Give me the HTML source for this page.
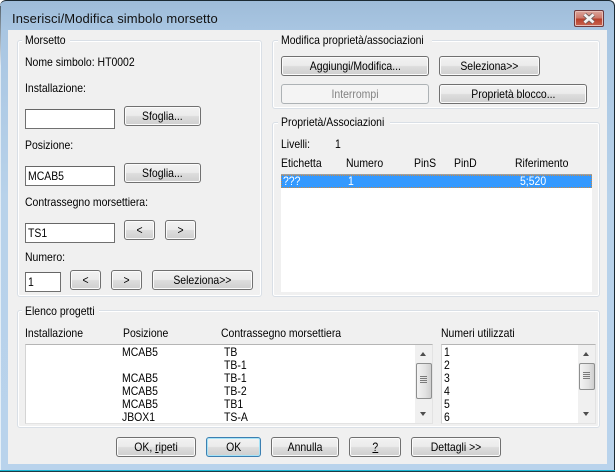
<!DOCTYPE html>
<html><head><meta charset="utf-8"><style>
html,body{margin:0;padding:0}
body{width:615px;height:472px;overflow:hidden;position:relative;font-family:"Liberation Sans",sans-serif;font-size:12px;color:#000;background:#fff}
#win{position:absolute;left:0;top:0;width:614px;height:471px;border:solid #1b2a33;border-width:1px 1px 0 0;border-radius:6px 6px 0 0;background:linear-gradient(180deg,#9ebcd9 0,#a9c6e2 30px,#b8d2ea 200px,#b9d3ec 100%)}
#lf{position:absolute;left:0;top:6px;width:1px;height:464px;background:linear-gradient(180deg,#55636e 0,#dfeaf4 60px,#e6f0f8 100%)}
#bot{position:absolute;left:0;top:470px;width:615px;height:1px;background:#19b5d2}
#bot2{position:absolute;left:0;top:471px;width:615px;height:1px;background:#1d3a44}
#client{position:absolute;left:8px;top:30px;width:599px;height:434px;background:#f0f0f0}
.a{position:absolute;white-space:nowrap;line-height:14px;transform:scaleX(.87);transform-origin:0 0}
.g{position:absolute;border:1px solid #d9dfe6;border-radius:3px;box-sizing:border-box;box-shadow:inset 0 0 0 1px #fff}
.l{position:absolute;background:#f0f0f0;padding:0 3px;white-space:nowrap;line-height:14px}
.l span{display:inline-block;transform:scaleX(.87);transform-origin:0 0}
.b{position:absolute;box-sizing:border-box;height:20px;border:1px solid #707070;border-radius:3px;background:linear-gradient(180deg,#f2f2f2 0,#ebebeb 48%,#dddddd 52%,#cfcfcf 100%);box-shadow:inset 0 0 0 1px #fbfbfb;text-align:center;line-height:18px;white-space:nowrap}
.b span{display:inline-block;transform:scaleX(.87)}
.d{background:#f4f4f4;border-color:#adb2b5;color:#838383;box-shadow:none}
.def{border-color:#3c7fb1;box-shadow:inset 0 0 0 1px #a6e3f7}
.i{position:absolute;box-sizing:border-box;height:20px;border:1px solid #707070;background:#fff;line-height:19px;padding-left:2px;border-top-color:#666}
.i span{display:inline-block;transform:scaleX(.87);transform-origin:0 0}
.list{position:absolute;background:#fff;box-sizing:border-box;border:1px solid #b5b5b5;border-left-color:#d4d4d4;border-right-color:#e3e3e3;border-bottom-color:#e3e3e3;overflow:hidden}
.sb{position:absolute;top:0;right:0;width:17px;height:78px;background:#f0f0f0}
.th{position:absolute;left:1px;width:14px;height:34px;top:19px;border:1px solid #8e8f8f;border-radius:2px;background:linear-gradient(90deg,#f3f3f3,#e2e2e2 60%,#cfcfcf)}
.ar{position:absolute;left:5px;width:0;height:0;border-left:3.5px solid transparent;border-right:3.5px solid transparent}
.gr{position:absolute;left:5px;width:7px;height:1px;background:#7a7a7a}
.rw{position:absolute;white-space:nowrap;line-height:13px;transform:scaleX(.87);transform-origin:0 0}
</style></head><body>
<div id="win"></div><div id="lf"></div><div id="bot"></div><div id="bot2"></div>
<div class="a" style="left:12px;top:12px;font-size:13px;letter-spacing:.1px;color:#111;transform:none">Inserisci/Modifica simbolo morsetto</div>
<div style="position:absolute;left:574px;top:10px;width:30px;height:17px;box-sizing:border-box;border:1px solid #6d3a3e;border-radius:2px;background:linear-gradient(180deg,#dca59b 0,#cd7a6c 45%,#b7402c 55%,#c9644f 100%);box-shadow:inset 0 0 0 1px #e7bdb6"><svg width="28" height="15" style="position:absolute;left:0;top:0"><path d="M9.5 3.5L18.500 11.500M18.500 3.500L9.500 11.500" stroke="#6b5a5a" stroke-width="4.4" fill="none"/><path d="M9.500 3.500L18.500 11.500M18.500 3.500L9.500 11.500" stroke="#f2f2f2" stroke-width="2.800" fill="none"/></svg></div>
<div id="client"></div>

<div class="g" style="left:17px;top:40px;width:245px;height:257px"></div>
<div class="l" style="left:22px;top:33px;width:42px"><span>Morsetto</span></div>
<div class="a" style="left:25px;top:55px">Nome simbolo: HT0002</div>
<div class="a" style="left:25px;top:81px">Installazione:</div>
<div class="i" style="left:25px;top:109px;width:90px"></div>
<div class="b" style="left:124px;top:106px;width:77px"><span>Sfoglia...</span></div>
<div class="a" style="left:25px;top:138px">Posizione:</div>
<div class="i" style="left:25px;top:166px;width:90px"><span>MCAB5</span></div>
<div class="b" style="left:124px;top:163px;width:77px"><span>Sfoglia...</span></div>
<div class="a" style="left:25px;top:195px">Contrassegno morsettiera:</div>
<div class="i" style="left:25px;top:223px;width:90px"><span>TS1</span></div>
<div class="b" style="left:124px;top:220px;width:31px"><span>&lt;</span></div>
<div class="b" style="left:165px;top:220px;width:31px"><span>&gt;</span></div>
<div class="a" style="left:25px;top:250px">Numero:</div>
<div class="i" style="left:25px;top:272px;width:36px"><span>1</span></div>
<div class="b" style="left:70px;top:270px;width:31px"><span>&lt;</span></div>
<div class="b" style="left:111px;top:270px;width:31px"><span>&gt;</span></div>
<div class="b" style="left:152px;top:270px;width:101px"><span>Seleziona&gt;&gt;</span></div>

<div class="g" style="left:272px;top:40px;width:328px;height:69px"></div>
<div class="l" style="left:278px;top:33px;width:148px"><span>Modifica proprietà/associazioni</span></div>
<div class="b" style="left:281px;top:56px;width:148px"><span>Aggiungi/Modifica...</span></div>
<div class="b" style="left:439px;top:56px;width:101px"><span>Seleziona&gt;&gt;</span></div>
<div class="b d" style="left:281px;top:84px;width:148px"><span>Interrompi</span></div>
<div class="b" style="left:439px;top:84px;width:148px"><span>Proprietà blocco...</span></div>

<div class="g" style="left:272px;top:122px;width:328px;height:175px"></div>
<div class="l" style="left:278px;top:115px;width:106px"><span>Proprietà/Associazioni</span></div>
<div class="a" style="left:281px;top:137px">Livelli:</div>
<div class="a" style="left:335px;top:137px">1</div>
<div class="a" style="left:281px;top:156px">Etichetta</div>
<div class="a" style="left:346px;top:156px">Numero</div>
<div class="a" style="left:414px;top:156px">PinS</div>
<div class="a" style="left:454px;top:156px">PinD</div>
<div class="a" style="left:515px;top:156px">Riferimento</div>
<div style="position:absolute;left:281px;top:174px;width:311px;height:118px;background:#fff;border-top:1px solid #a0a0a0;box-sizing:border-box"></div>
<div style="position:absolute;left:281px;top:175px;width:311px;height:13px;background:#3399ff;outline:1px dotted #c98a45;outline-offset:-1px"></div>
<div class="a" style="left:283px;top:174px;color:#fff">???</div>
<div class="a" style="left:348px;top:174px;color:#fff">1</div>
<div class="a" style="left:520px;top:174px;color:#fff">5;520</div>

<div class="g" style="left:17px;top:310px;width:583px;height:118px"></div>
<div class="l" style="left:22px;top:304px;width:71px"><span>Elenco progetti</span></div>
<div class="a" style="left:25px;top:326px">Installazione</div>
<div class="a" style="left:123px;top:326px">Posizione</div>
<div class="a" style="left:221px;top:326px">Contrassegno morsettiera</div>
<div class="a" style="left:441px;top:326px">Numeri utilizzati</div>

<div class="list" style="left:25px;top:344px;width:408px;height:80px">
<div class="rw" style="left:96px;top:1px">MCAB5</div><div class="rw" style="left:198px;top:1px">TB</div>
<div class="rw" style="left:198px;top:14px">TB-1</div>
<div class="rw" style="left:96px;top:27px">MCAB5</div><div class="rw" style="left:198px;top:27px">TB-1</div>
<div class="rw" style="left:96px;top:40px">MCAB5</div><div class="rw" style="left:198px;top:40px">TB-2</div>
<div class="rw" style="left:96px;top:53px">MCAB5</div><div class="rw" style="left:198px;top:53px">TB1</div>
<div class="rw" style="left:96px;top:66px">JBOX1</div><div class="rw" style="left:198px;top:66px">TS-A</div>
<div class="sb"><div class="ar" style="top:7px;border-bottom:4px solid #4d4d4d"></div><div class="th" style="top:18px"><div class="gr" style="left:3px;top:12px"></div><div class="gr" style="left:3px;top:14px"></div><div class="gr" style="left:3px;top:16px"></div><div class="gr" style="left:3px;top:18px"></div></div><div class="ar" style="top:67px;border-top:4px solid #4d4d4d"></div></div>
</div>
<div class="list" style="left:441px;top:344px;width:155px;height:80px">
<div class="rw" style="left:2px;top:1px">1</div><div class="rw" style="left:2px;top:14px">2</div><div class="rw" style="left:2px;top:27px">3</div><div class="rw" style="left:2px;top:40px">4</div><div class="rw" style="left:2px;top:53px">5</div><div class="rw" style="left:2px;top:66px">6</div>
<div class="sb"><div class="ar" style="top:7px;border-bottom:4px solid #4d4d4d"></div><div class="th" style="top:18px;height:25px"><div class="gr" style="left:3px;top:8px"></div><div class="gr" style="left:3px;top:10px"></div><div class="gr" style="left:3px;top:12px"></div><div class="gr" style="left:3px;top:14px"></div></div><div class="ar" style="top:67px;border-top:4px solid #4d4d4d"></div></div>
</div>

<div class="b" style="left:116px;top:437px;width:80px"><span>OK, <u>r</u>ipeti</span></div>
<div class="b def" style="left:206px;top:437px;width:55px"><span>OK</span></div>
<div class="b" style="left:271px;top:437px;width:68px"><span>Annulla</span></div>
<div class="b" style="left:349px;top:437px;width:52px"><span><u>?</u></span></div>
<div class="b" style="left:411px;top:437px;width:90px"><span>Dettagli &gt;&gt;</span></div>
</body></html>
